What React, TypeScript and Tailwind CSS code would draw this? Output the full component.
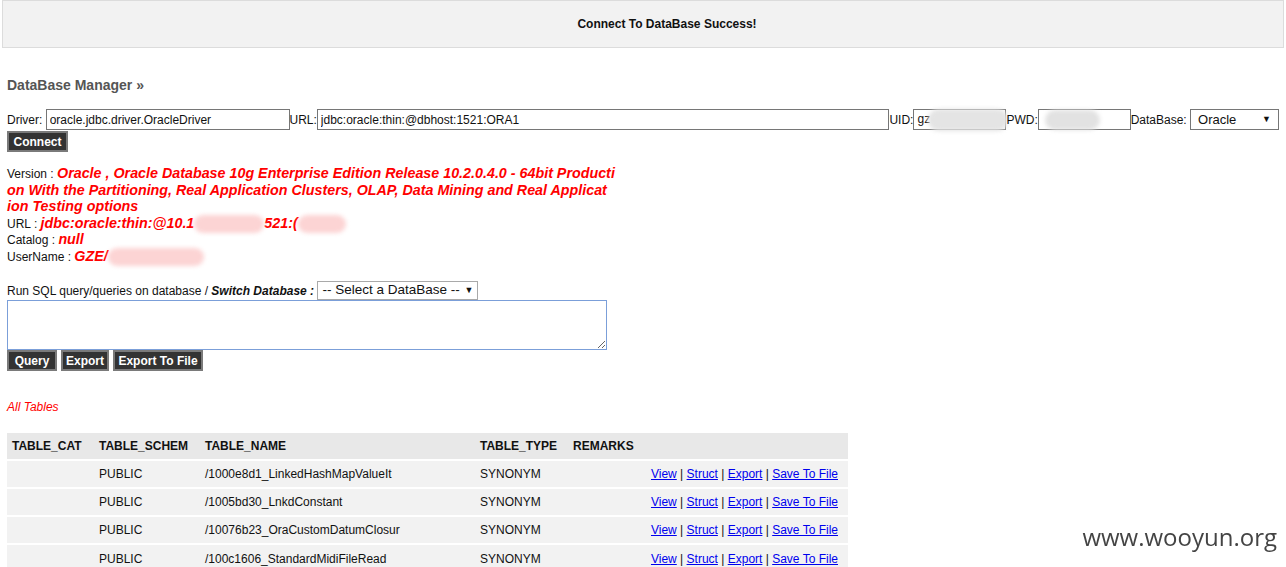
const rows = [
  '/1000e8d1_LinkedHashMapValueIt',
  '/1005bd30_LnkdConstant',
  '/10076b23_OraCustomDatumClosur',
  '/100c1606_StandardMidiFileRead',
]

function Btn({ children, w }: { children: React.ReactNode; w: string }) {
  return (
    <button className={`h-[21px] border-2 border-[#7a7a7a] bg-[#333] px-0 text-[12px] font-bold leading-none text-white ${w}`}>
      {children}
    </button>
  )
}

function Blob({ w, c = 'bg-[#fcd4d4]' }: { w: number; c?: string }) {
  return <span className={`inline-block h-[18px] rounded-full align-middle blur-[2px] ${c}`} style={{ width: w }} />
}

const red = 'text-[14.3px] font-bold italic text-[#f00] leading-[16.5px]'

export default function App() {
  return (
    <div className="min-h-screen bg-white text-[12px] text-[#111] font-['Liberation_Sans',Arial,sans-serif]">
      <div className="mx-[2px] flex h-[48px] items-center justify-center border border-[#dcdcdc] bg-[#f2f2f2] pl-[48px] text-[12px] font-bold">
        Connect To DataBase Success!
      </div>

      <div className="px-[7px]">
        <h2 className="mt-[27px] text-[14px] font-bold text-[#555]">DataBase Manager »</h2>

        <div className="mt-[13px] flex items-center leading-none">
          <span>Driver:&nbsp;</span>
          <input
            className="h-[21px] w-[244px] border border-[#767676] px-[3px] text-[12px] outline-none"
            defaultValue="oracle.jdbc.driver.OracleDriver"
          />
          <span>URL:</span>
          <input
            className="h-[21px] w-[573px] border border-[#767676] px-[3px] text-[12px] outline-none"
            defaultValue="jdbc:oracle:thin:@dbhost:1521:ORA1"
          />
          <span>UID:</span>
          <div className="relative h-[21px] w-[93px] border border-[#767676] px-[3px] leading-[19px]">
            gz
            <span className="absolute left-[14px] top-[-1px] h-[22px] w-[80px] rounded-full bg-[#e4e4e4] blur-[2px]" />
          </div>
          <span className="relative">PWD:</span>
          <div className="relative h-[21px] w-[93px] border border-[#767676]">
            <span className="absolute left-[6px] top-0 h-[20px] w-[55px] rounded-full bg-[#e2e2e2] blur-[2px]" />
          </div>
          <span>DataBase:&nbsp;</span>
          <div className="flex h-[21px] w-[89px] items-center justify-between border border-[#767676] px-[7px] text-[13px]">
            <span>Oracle</span>
            <span className="text-[9px]">▼</span>
          </div>
        </div>

        <div className="mt-[1px]">
          <Btn w="w-[61px]">Connect</Btn>
        </div>

        <div className="mt-[13px] whitespace-nowrap leading-[16.5px]">
          <div className="h-[16.5px]">
            Version : <span className={red}>Oracle , Oracle Database 10g Enterprise Edition Release 10.2.0.4.0 - 64bit Producti</span>
          </div>
          <div className="h-[16.5px]">
            <span className={red}>on With the Partitioning, Real Application Clusters, OLAP, Data Mining and Real Applicat</span>
          </div>
          <div className="h-[16.5px]">
            <span className={red}>ion Testing options</span>
          </div>
          <div className="h-[16.5px]">
            URL : <span className={red}>jdbc:oracle:thin:@10.1</span>
            <Blob w={70} />
            <span className={red}>521:(</span>
            <Blob w={48} />
          </div>
          <div className="h-[16.5px]">
            Catalog : <span className={red}>null</span>
          </div>
          <div className="h-[16.5px]">
            UserName : <span className={red}>GZE/</span>
            <Blob w={96} />
          </div>
        </div>

        <div className="mt-[17px] flex items-center">
          <span>Run SQL query/queries on database / <b className="italic">Switch Database :</b>&nbsp;</span>
          <div className="flex h-[19px] w-[161px] items-center justify-between border border-[#a9a9a9] px-[4px] text-[13.5px]">
            <span>-- Select a DataBase --</span>
            <span className="text-[9px]">▼</span>
          </div>
        </div>
        <textarea className="block h-[50px] w-[600px] resize-y border border-[#7b9fd9] outline-none" />
        <div className="flex gap-[4px]">
          <Btn w="w-[50px]">Query</Btn>
          <Btn w="w-[48px]">Export</Btn>
          <Btn w="w-[90px]">Export To File</Btn>
        </div>

        <p className="mt-[27px] italic text-[#f00]">All Tables</p>

        <table className="mt-[17px] w-[841px] border-collapse text-left text-[12px]">
          <thead>
            <tr className="h-[27px] bg-[#e8e8e8] font-bold">
              <th className="w-[87px] pl-[5px] font-bold">TABLE_CAT</th>
              <th className="w-[106px] pl-[5px] font-bold">TABLE_SCHEM</th>
              <th className="w-[275px] pl-[5px] font-bold">TABLE_NAME</th>
              <th className="w-[93px] pl-[5px] font-bold">TABLE_TYPE</th>
              <th className="pl-[5px] font-bold">REMARKS</th>
              <th />
            </tr>
          </thead>
          <tbody>
            {rows.map((r) => (
              <tr key={r} className="h-[28px] border-t-2 border-white bg-[#f2f2f2]">
                <td />
                <td className="pl-[5px]">PUBLIC</td>
                <td className="pl-[5px]">{r}</td>
                <td className="pl-[5px]">SYNONYM</td>
                <td />
                <td className="pr-[10px] text-right">
                  <a className="text-[#00e] underline" href="#">View</a> | <a className="text-[#00e] underline" href="#">Struct</a> | <a className="text-[#00e] underline" href="#">Export</a> | <a className="text-[#00e] underline" href="#">Save To File</a>
                </td>
              </tr>
            ))}
          </tbody>
        </table>
      </div>

      <div className="fixed right-[9px] top-[519px] font-['Open_Sans',sans-serif] text-[24px] text-[#444]">www.wooyun.org</div>
    </div>
  )
}
